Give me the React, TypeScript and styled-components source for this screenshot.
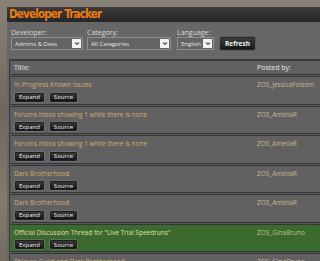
import React from "react";
import styled, { createGlobalStyle } from "styled-components";

const Global = createGlobalStyle`
  html, body { margin: 0; padding: 0; }
  body {
    background: linear-gradient(180deg, #8a8178 0%, #6f675f 40%, #857a6c 70%, #6c645c 100%);
    font-family: "Open Sans", "DejaVu Sans", sans-serif;
    overflow: hidden;
  }
`;

const Page = styled.div`
  padding: 7px 0 0 7px;
  width: 340px;
`;

const Header = styled.div`
  height: 15px;
  background: linear-gradient(180deg, #3a3a3a 0%, #262626 100%);
  display: flex;
  align-items: center;
  padding-left: 2px;
`;

const Title = styled.h1`
  margin: 0;
  font-family: "DejaVu Sans Condensed", "DejaVu Sans", sans-serif;
  font-weight: bold;
  font-size: 11.5px;
  letter-spacing: -0.8px;
  color: #f07c12;
  line-height: 15px;
`;

const Panel = styled.div`
  background: #676767;
  padding: 6px 0 0 2px;
  min-height: 260px;
`;

const Filters = styled.div`
  display: flex;
  align-items: flex-end;
  gap: 4px;
  padding-left: 2px;
`;

const Field = styled.div<{ $gap?: number }>`
  display: flex;
  flex-direction: column;
  margin-right: ${(p) => p.$gap || 0}px;
`;

const Label = styled.span`
  font-size: 7px;
  color: #d8d8d8;
  line-height: 9px;
  height: 9px;
`;

const Select = styled.div<{ $w: number }>`
  width: ${(p) => p.$w}px;
  height: 13px;
  box-sizing: border-box;
  border: 1px solid #8e8e8e;
  background: #646464;
  display: flex;
  align-items: center;
  justify-content: space-between;
  padding: 0 1px 0 3px;
  font-size: 6px;
  color: #e4e4e4;
`;

const Arrow = styled.span`
  width: 9px;
  height: 9px;
  background: #f2f2f2;
  display: flex;
  align-items: center;
  justify-content: center;
`;

const Refresh = styled.div`
  height: 11px;
  padding: 0 4px;
  display: flex;
  align-items: center;
  background: linear-gradient(180deg, #3c3c3c 0%, #161616 100%);
  border: 1px solid #2a2a2a;
  box-shadow: 0 0 0 1px #5a5a5a;
  border-radius: 1px;
  color: #f2f2f2;
  font-size: 6.5px;
  font-weight: bold;
  margin-left: 2px;
`;

const Table = styled.div`
  margin-top: 9px;
  border-left: 1px solid #3a3a3a;
  border-top: 1px solid #3a3a3a;
  background: #585858;
  display: flex;
  flex-direction: column;
  gap: 1px;
  padding-left: 1px;
`;

const Row = styled.div<{ $green?: boolean }>`
  display: flex;
  background: ${(p) => (p.$green ? "#3b6a2e" : "#616161")};
  border-top: 1px solid #363636;
  border-bottom: 1px solid #363636;
  padding: 3px 0 2px 3px;
`;

const HeadRow = styled(Row)`
  padding: 2px 0 2px 3px;
`;

const Main = styled.div`
  width: 243px;
  display: flex;
  flex-direction: column;
  gap: 3.5px;
`;

const HeadText = styled.span`
  font-size: 7px;
  color: #e6e6e6;
  line-height: 9px;
`;

const TopicTitle = styled.span<{ $green?: boolean }>`
  font-size: 6.5px;
  line-height: 9px;
  color: ${(p) => (p.$green ? "#e6dfa8" : "#cfae72")};
  white-space: nowrap;
`;

const Poster = styled.span`
  font-size: 6.5px;
  line-height: 9px;
  color: #c9b894;
`;

const Buttons = styled.div`
  display: flex;
  gap: 6px;
  padding-left: 1px;
`;

const Btn = styled.span`
  height: 7px;
  padding: 0 3px;
  display: flex;
  align-items: center;
  background: linear-gradient(180deg, #3a3a3a 0%, #141414 100%);
  border: 1px solid #1e1e1e;
  box-shadow: 0 0 0 0.5px #808080;
  border-radius: 1px;
  color: #f0f0f0;
  font-size: 6px;
`;

const Chevron = () => (
  <svg width="6" height="5" viewBox="0 0 6 5">
    <path d="M1 1.5 L3 3.5 L5 1.5" stroke="#555" strokeWidth="1.1" fill="none" />
  </svg>
);

const topics = [
  { title: "In-Progress Known Issues", by: "ZOS_JessicaFolsom" },
  { title: "Forums inbox showing 1 while there is none", by: "ZOS_AmeliaR" },
  { title: "Forums inbox showing 1 while there is none", by: "ZOS_AmeliaR" },
  { title: "Dark Brotherhood", by: "ZOS_AmeliaR" },
  { title: "Dark Brotherhood", by: "ZOS_AmeliaR" },
  { title: "Official Discussion Thread for \"Live Trial Speedruns\"", by: "ZOS_GinaBruno", green: true },
  { title: "Thieves Guild and Dark Brotherhood", by: "ZOS_GinaBruno" },
];

export default function App() {
  return (
    <Page>
      <Global />
      <Header>
        <Title>Developer Tracker</Title>
      </Header>
      <Panel>
        <Filters>
          <Field>
            <Label>Developer:</Label>
            <Select $w={72}>
              Admins &amp; Devs
              <Arrow><Chevron /></Arrow>
            </Select>
          </Field>
          <Field $gap={2}>
            <Label>Category:</Label>
            <Select $w={84}>
              All Categories
              <Arrow><Chevron /></Arrow>
            </Select>
          </Field>
          <Field>
            <Label>Language:</Label>
            <Select $w={37}>
              English
              <Arrow><Chevron /></Arrow>
            </Select>
          </Field>
          <Refresh>Refresh</Refresh>
        </Filters>
        <Table>
          <HeadRow>
            <Main>
              <HeadText>Title:</HeadText>
            </Main>
            <HeadText>Posted by:</HeadText>
          </HeadRow>
          {topics.map((t, i) => (
            <Row key={i} $green={t.green}>
              <Main>
                <TopicTitle $green={t.green}>{t.title}</TopicTitle>
                <Buttons>
                  <Btn>Expand</Btn>
                  <Btn>Source</Btn>
                </Buttons>
              </Main>
              <Poster>{t.by}</Poster>
            </Row>
          ))}
        </Table>
      </Panel>
    </Page>
  );
}
